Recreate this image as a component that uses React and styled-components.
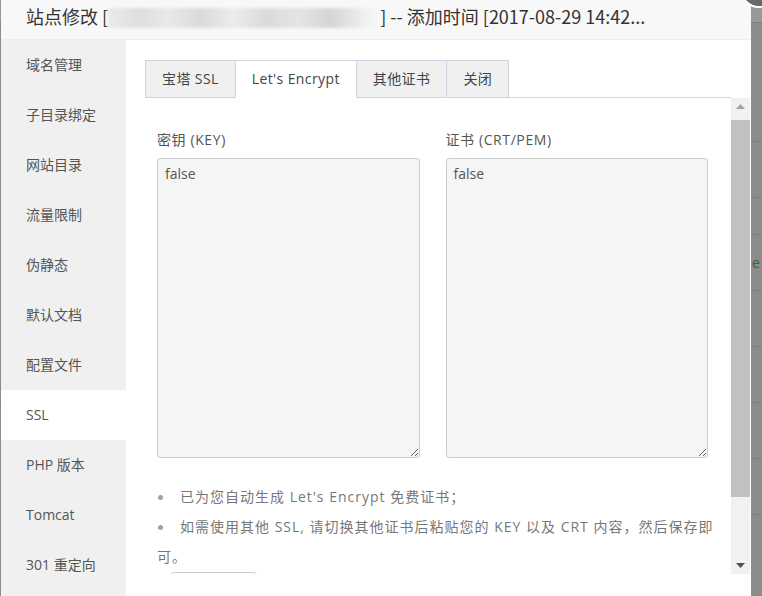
import React from 'react';
import styled, { createGlobalStyle } from 'styled-components';

const GlobalStyle = createGlobalStyle`
  html, body {
    margin: 0;
    padding: 0;
    width: 762px;
    height: 596px;
    overflow: hidden;
    background: #8c8c8c;
    font-family: "Open Sans", "Noto Sans CJK SC", sans-serif;
  }
`;

const Backdrop = styled.div`
  position: relative;
  width: 762px;
  height: 596px;
  background: #8c8c8c;
  display: flex;
  flex-direction: column;
`;

const PageRow = styled.div`
  height: ${(p) => p.h}px;
  flex-shrink: 0;
  background: ${(p) => (p.light ? '#989898' : 'transparent')};
  border-bottom: 1px solid #7e7e7e;
  box-sizing: border-box;
  font-size: 14px;
  line-height: ${(p) => p.h}px;
  color: #2b6a2b;
  padding-left: 752px;
`;

const Modal = styled.div`
  position: absolute;
  top: 0;
  left: 1px;
  width: 750px;
  height: 596px;
  background: #fff;
  display: flex;
  flex-direction: column;
`;

const CloseButton = styled.span`
  position: absolute;
  top: -30px;
  right: -27px;
  width: 34px;
  height: 34px;
  border-radius: 50%;
  background: #686868;
  border: 2px solid #fff;
`;

const Header = styled.div`
  height: 39px;
  flex-shrink: 0;
  border-bottom: 1px solid #eee;
  background: #f8f8f8;
  padding-left: 25px;
  font-family: "Noto Sans CJK SC", sans-serif;
  font-size: 18px;
  line-height: 32px;
  color: #333;
  white-space: nowrap;
  overflow: hidden;
`;

const Blurred = styled.span`
  display: inline-block;
  width: 272px;
  height: 20px;
  vertical-align: -4px;
  background: linear-gradient(
    90deg,
    #eaeaea 0%,
    #dedede 12%,
    #e9e9e9 22%,
    #d9d9d9 34%,
    #ececec 46%,
    #dadada 58%,
    #e4e4e4 70%,
    #d5d5d5 82%,
    #efefef 94%,
    #f8f8f8 100%
  );
  filter: blur(1.5px);
`;

const Body = styled.div`
  flex: 1;
  display: flex;
  min-height: 0;
`;

const Nav = styled.ul`
  width: 125px;
  flex-shrink: 0;
  margin: 0;
  padding: 0;
  list-style: none;
  background: #f0f0f0;
`;

const NavItem = styled.li`
  height: 50px;
  line-height: 50px;
  padding-left: 25px;
  font-size: 14px;
  color: #555;
  background: ${(p) => (p.active ? '#fff' : 'transparent')};
`;

const Main = styled.div`
  flex: 1;
  min-width: 0;
  display: flex;
  flex-direction: column;
  padding: 20px 20px 0 19px;
`;

const Tabs = styled.div`
  display: flex;
  height: 38px;
  flex-shrink: 0;
  box-sizing: border-box;
  border-bottom: 1px solid #d2d2e0;
`;

const Tab = styled.span`
  height: ${(p) => (p.active ? 38 : 37)}px;
  box-sizing: border-box;
  padding: 0 16px;
  line-height: 36px;
  font-size: 14px;
  letter-spacing: 0.4px;
  color: #444;
  border: 1px solid #d2d2e0;
  border-bottom: none;
  margin-right: -1px;
  background: ${(p) => (p.active ? '#fff' : '#f0f0f0')};
  position: relative;
  z-index: ${(p) => (p.active ? 1 : 0)};
`;

const ScrollArea = styled.div`
  display: flex;
  height: 476px;
  flex-shrink: 0;
  margin-right: -19px;
`;

const ScrollContent = styled.div`
  flex: 1;
  min-width: 0;
  overflow: hidden;
  padding: 32px 23px 0 12px;
`;

const Scrollbar = styled.div`
  width: 19px;
  flex-shrink: 0;
  display: flex;
  flex-direction: column;
  background: #f1f1f1;
`;

const ScrollArrow = styled.div`
  height: 17px;
  flex-shrink: 0;
  display: flex;
  align-items: center;
  justify-content: center;
`;

const ScrollTrack = styled.div`
  flex: 1;
  padding-top: 5px;
  display: flex;
  flex-direction: column;
`;

const ScrollThumb = styled.div`
  height: 377px;
  background: #c1c1c1;
`;

const Fields = styled.div`
  display: grid;
  grid-template-columns: 1fr 1fr;
  column-gap: 26px;
`;

const Label = styled.div`
  font-size: 14px;
  line-height: 20px;
  letter-spacing: 0.6px;
  color: #555;
  margin-bottom: 8px;
`;

const CertArea = styled.textarea`
  display: block;
  width: 100%;
  height: 300px;
  box-sizing: border-box;
  margin: 0;
  padding: 5px 7px;
  border: 1px solid #ccc;
  border-radius: 3px;
  background: #f5f5f5;
  font-family: inherit;
  font-size: 14px;
  line-height: 20px;
  color: #555;
  outline: none;
`;

const Tips = styled.ul`
  margin: 24px -12px 0 0;
  padding: 0;
  list-style: none;
  font-size: 14px;
  line-height: 30px;
  letter-spacing: 1px;
  color: #777;

  li::before {
    content: '';
    display: inline-block;
    width: 5px;
    height: 5px;
    border-radius: 50%;
    background: #a0a0a0;
    margin: 0 17px 0 1px;
    vertical-align: 2px;
  }
`;

const ApplyButton = styled.button`
  display: block;
  margin: 0 0 50px 13px;
  width: 87px;
  height: 32px;
  border: 1px solid #ccc;
  border-radius: 4px;
  background: #fff;
`;

const Arrow = ({ up, color }) => (
  <svg width="9" height="5" viewBox="0 0 9 5">
    <path d={up ? 'M4.5 0L9 5H0z' : 'M0 0H9L4.5 5z'} fill={color} />
  </svg>
);

const navItems = [
  '域名管理',
  '子目录绑定',
  '网站目录',
  '流量限制',
  '伪静态',
  '默认文档',
  '配置文件',
  'SSL',
  'PHP 版本',
  'Tomcat',
  '301 重定向',
];

const tabs = ['宝塔 SSL', "Let's Encrypt", '其他证书', '关闭'];

const pageRows = [
  { h: 23, light: true },
  { h: 119 },
  { h: 56 },
  { h: 37 },
  { h: 56, text: 'e' },
  { h: 56 },
  { h: 56 },
  { h: 56 },
  { h: 56 },
];

const App = () => (
  <>
    <GlobalStyle />
    <Backdrop>
      {pageRows.map((r, i) => (
        <PageRow key={i} h={r.h} light={r.light}>
          {r.text}
        </PageRow>
      ))}

      <Modal>
        <CloseButton />
        <Header>
          站点修改 [<Blurred />] -- 添加时间 [2017-08-29 14:42...
        </Header>

        <Body>
          <Nav>
            {navItems.map((item) => (
              <NavItem key={item} active={item === 'SSL'}>
                {item}
              </NavItem>
            ))}
          </Nav>

          <Main>
            <Tabs>
              {tabs.map((t) => (
                <Tab key={t} active={t === "Let's Encrypt"}>
                  {t}
                </Tab>
              ))}
            </Tabs>

            <ScrollArea>
              <ScrollContent>
                <Fields>
                  <div>
                    <Label>密钥 (KEY)</Label>
                    <CertArea defaultValue="false" readOnly />
                  </div>
                  <div>
                    <Label>证书 (CRT/PEM)</Label>
                    <CertArea defaultValue="false" readOnly />
                  </div>
                </Fields>

                <Tips>
                  <li>已为您自动生成 Let's Encrypt 免费证书；</li>
                  <li>
                    如需使用其他 SSL, 请切换其他证书后粘贴您的 KEY 以及 CRT 内容，然后保存即可。
                  </li>
                </Tips>

                <ApplyButton aria-label="关闭SSL" />
              </ScrollContent>

              <Scrollbar>
                <ScrollArrow>
                  <Arrow up color="#a3a3a3" />
                </ScrollArrow>
                <ScrollTrack>
                  <ScrollThumb />
                </ScrollTrack>
                <ScrollArrow>
                  <Arrow color="#505050" />
                </ScrollArrow>
              </Scrollbar>
            </ScrollArea>
          </Main>
        </Body>
      </Modal>
    </Backdrop>
  </>
);

export default App;
